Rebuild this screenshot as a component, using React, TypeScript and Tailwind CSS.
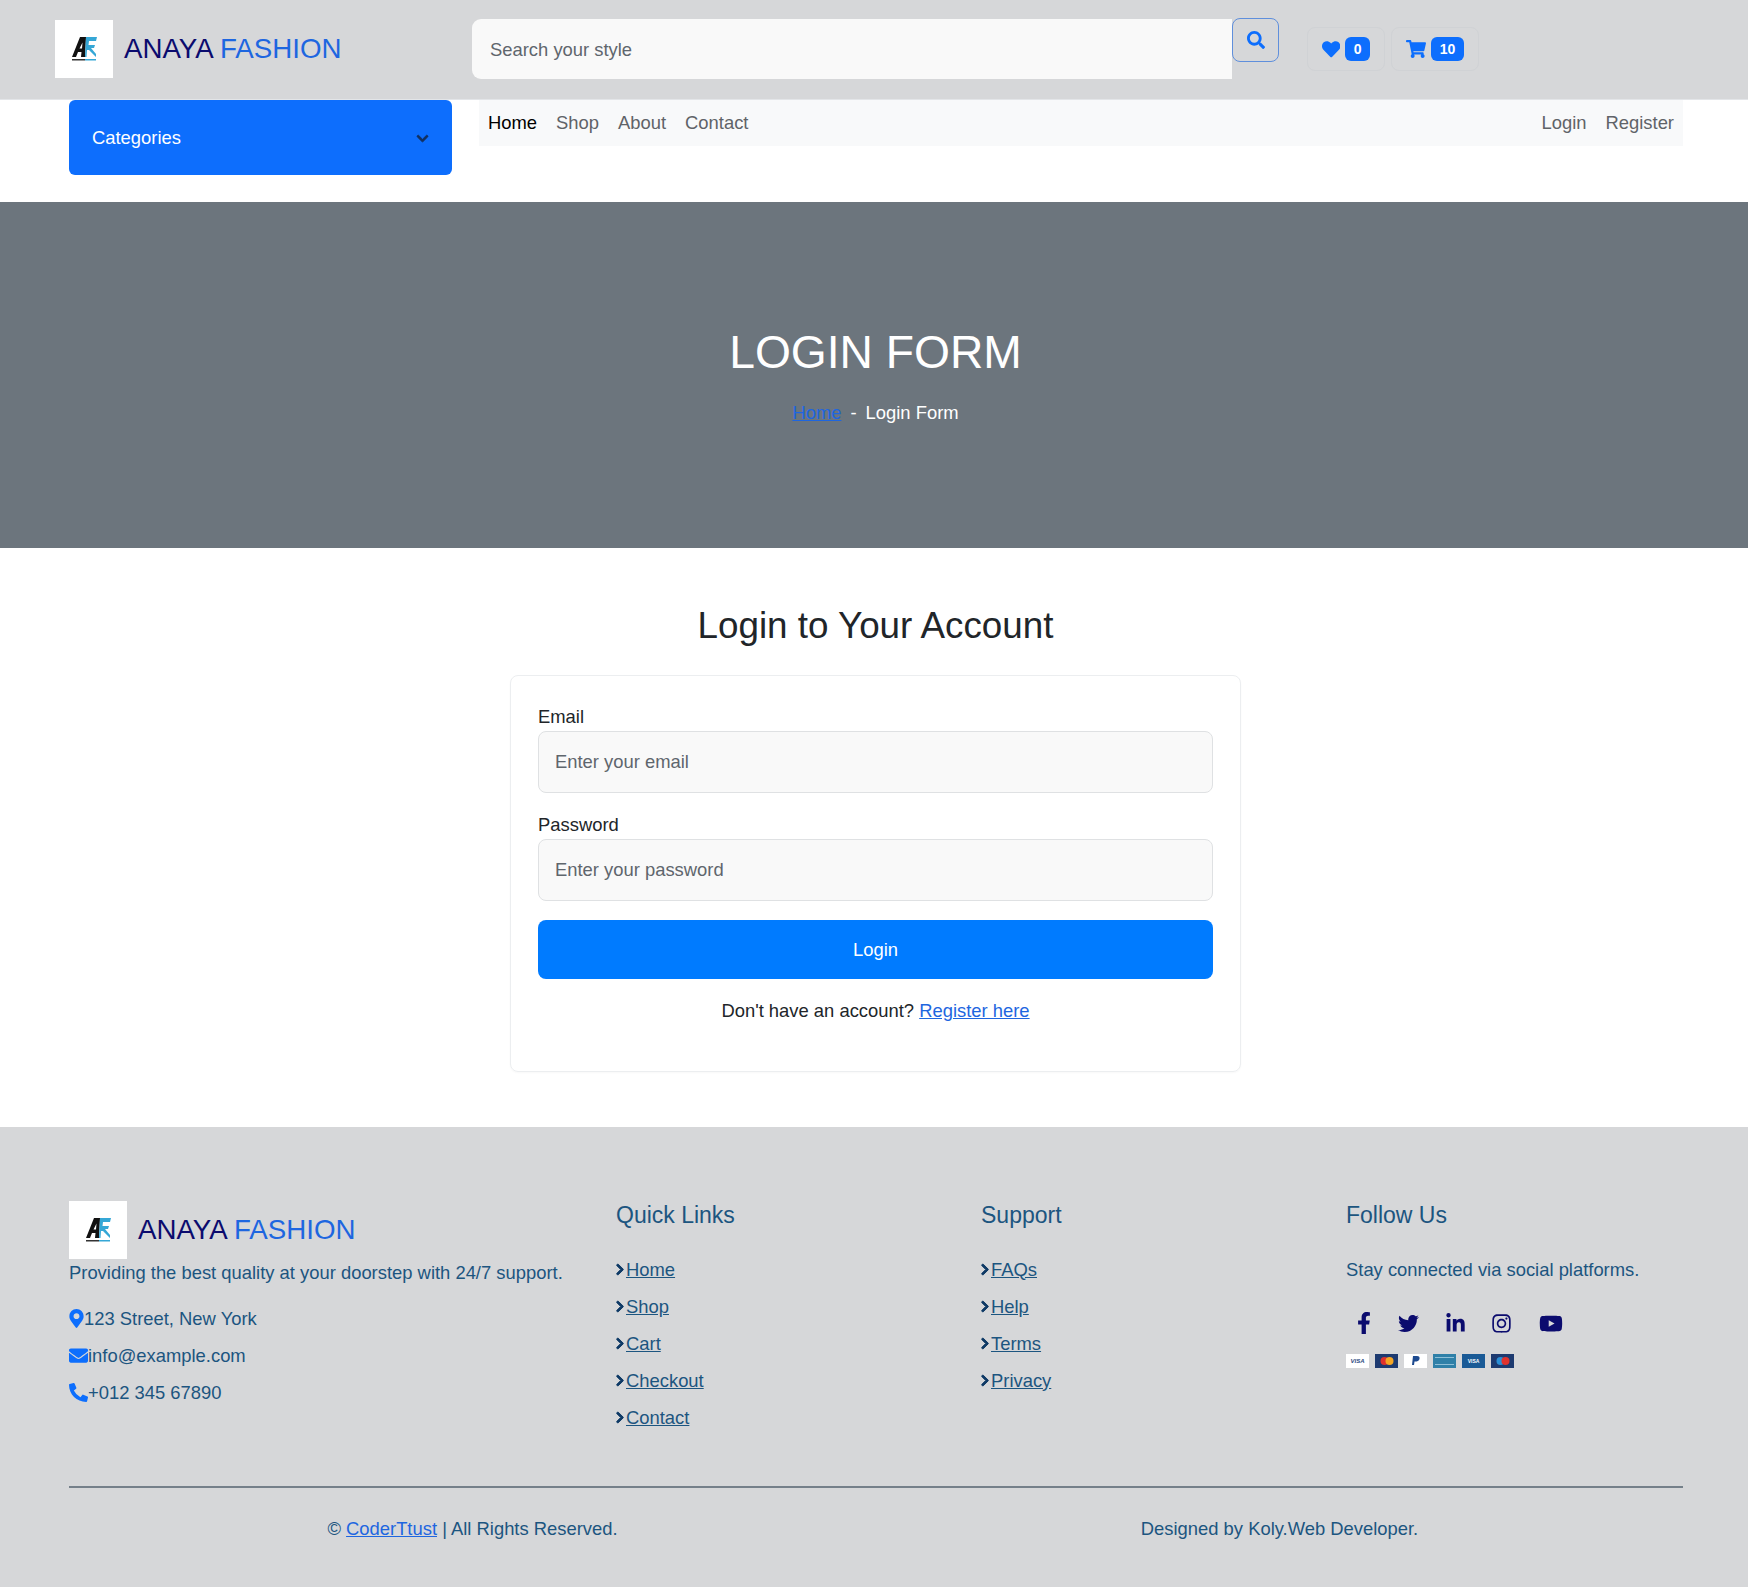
import { FaChevronDown, FaChevronRight, FaEnvelope, FaFacebookF, FaHeart, FaInstagram, FaLinkedinIn, FaMapMarkerAlt, FaPhoneAlt, FaSearch, FaShoppingCart, FaTwitter, FaYoutube } from "react-icons/fa"

const quickLinks = ["Home", "Shop", "Cart", "Checkout", "Contact"]
const supportLinks = ["FAQs", "Help", "Terms", "Privacy"]

const Logo = () => (
  <div className="flex h-[58px] w-[58px] shrink-0 items-center justify-center bg-white">
    <svg width="26" height="26" viewBox="0 0 26 26">
      <path d="M1 21 9 1h6l-1 20h-4l.5-5H7l-2 5zM8.500 12.500h2.500l.5-6z" fill="#111" fillRule="evenodd" />
      <polygon points="15,1 26,1 25,5 18,5 17.500,9 24,9 23,12 20,12 25,18 25,21 18,14 16,14 15.500,21 14,21" fill="#35a7d6" />
      <rect x="1" y="23" width="13" height="1.500" fill="#333" />
      <rect x="14" y="23" width="11" height="1.500" fill="#35a7d6" />
    </svg>
  </div>
)

const Brand = () => (
  <div className="flex items-center gap-[11px]">
    <Logo />
    <span className="text-[27.7px] leading-none">
      <span className="text-[#0b0b6e]">ANAYA</span> <span className="text-[#1e66e0]">FASHION</span>
    </span>
  </div>
)

const FooterLink = ({ name }: { name: string }) => (
  <li className="flex h-[37px] items-center">
    <FaChevronRight strokeWidth={40} className="mr-[2px] h-[13px] w-[8px] text-[#0f3a66]" />
    <a href="#" className="underline">{name}</a>
  </li>
)

const PayCard = ({ bg, children }: { bg: string; children: React.ReactNode }) => (
  <div className={`flex h-[14px] w-[23px] items-center justify-center ${bg}`}>{children}</div>
)

export default function App() {
  return (
    <div className="min-h-[1587px] bg-white font-['Liberation_Sans',Arial,sans-serif] text-[18.4px] text-[#212529]">
      {/* top bar */}
      <header className="flex h-[100px] items-center border-b border-[#e3e5e8] bg-[#d6d7d9] pb-[1px] pl-[55px]">
        <div className="w-[417px]">
          <Brand />
        </div>
        <div className="flex h-[60px] w-[760px] items-center rounded-l-[9px] bg-[#f9f9f9] px-[18px] pt-[2px] text-[#5f666d]">Search your style</div>
        <button className="mb-[19px] flex h-[44px] w-[47px] items-center justify-center rounded-[8px] border border-[#5f8fdc] text-[18px] text-[#0d6efd]">
          <FaSearch />
        </button>
        <div className="ml-[28px] flex h-[44px] w-[78px] items-center justify-center gap-[5px] rounded-[8px] border border-[#d0d2d5] text-[#0d6efd]">
          <FaHeart />
          <span className="flex h-[24px] w-[25px] items-center justify-center rounded-[6px] bg-[#0d6efd] text-[14px] font-bold text-white">0</span>
        </div>
        <div className="ml-[6px] flex h-[44px] w-[88px] items-center justify-center gap-[5px] rounded-[8px] border border-[#d0d2d5] text-[20px] text-[#0d6efd]">
          <FaShoppingCart />
          <span className="flex h-[24px] w-[33px] items-center justify-center rounded-[6px] bg-[#0d6efd] text-[14px] font-bold text-white">10</span>
        </div>
      </header>

      {/* nav */}
      <div className="flex h-[102px] items-start pl-[69px] pr-[65px]">
        <div className="flex h-[75px] w-[383px] items-center justify-between rounded-[6px] bg-[#0d6efd] px-[23px] pt-[1px] text-white">
          Categories
          <FaChevronDown strokeWidth={30} className="text-[13px] text-[#12305f]" />
        </div>
        <nav className="ml-[27px] flex h-[46px] flex-1 items-center justify-between bg-[#f8f9fa] px-[9px] text-[#5f6368]">
          <div className="flex gap-[19px]">
            <a href="#" className="text-black">Home</a>
            <a href="#">Shop</a>
            <a href="#">About</a>
            <a href="#">Contact</a>
          </div>
          <div className="flex gap-[19px]">
            <a href="#">Login</a>
            <a href="#">Register</a>
          </div>
        </nav>
      </div>

      {/* hero */}
      <section className="flex h-[346px] flex-col items-center bg-[#6c757d] pl-[3px] pt-[123px] text-white">
        <h1 className="text-[46.2px] leading-[54px]">LOGIN FORM</h1>
        <div className="mt-[20px] flex gap-[9px]">
          <a href="#" className="text-[#1e66e0] underline">Home</a>
          <span>-</span>
          <span>Login Form</span>
        </div>
      </section>

      {/* login */}
      <main className="flex flex-col items-center pl-[3px] pt-[56px]">
        <h2 className="text-[36.8px] leading-[44px]">Login to Your Account</h2>
        <div className="mt-[27px] h-[397px] w-[731px] rounded-[8px] border border-[#eceef0] px-[27px] pt-[28px] shadow-[0_1px_2px_rgba(0,0,0,0.03)]">
          <label className="block leading-[26px]">Email</label>
          <input placeholder="Enter your email" className="mt-[1px] h-[62px] w-full rounded-[8px] border border-[#dfe1e3] bg-[#f9f9f9] px-[16px] outline-none placeholder:text-[#5f666d]" />
          <label className="mt-[19px] block leading-[26px]">Password</label>
          <input placeholder="Enter your password" className="mt-[1px] h-[62px] w-full rounded-[8px] border border-[#dfe1e3] bg-[#f9f9f9] px-[16px] outline-none placeholder:text-[#5f666d]" />
          <button className="mt-[19px] h-[59px] w-full rounded-[8px] bg-[#007bff] text-white">Login</button>
          <p className="mt-[19px] text-center leading-[26px]">
            Don't have an account? <a href="#" className="text-[#1e66e0] underline">Register here</a>
          </p>
        </div>
      </main>

      {/* footer */}
      <footer className="mt-[55px] h-[460px] bg-[#d6d7d9] px-[65px] pt-[74px] text-[#1c5580]">
        <div className="grid h-[285px] grid-cols-[547px_365px_365px_1fr] pl-[4px]">
          <div>
            <Brand />
            <p className="mt-[1px] leading-[26px]">Providing the best quality at your doorstep with 24/7 support.</p>
            <p className="mt-[14px] flex h-[37px] items-center"><FaMapMarkerAlt className="h-[19px] w-[15px] text-[#0d6efd]" />123 Street, New York</p>
            <p className="flex h-[37px] items-center"><FaEnvelope className="text-[19px] text-[#0d6efd]" />info@example.com</p>
            <p className="flex h-[37px] items-center"><FaPhoneAlt className="text-[19px] text-[#0d6efd]" />+012 345 67890</p>
          </div>
          <div>
            <h5 className="text-[23px] leading-[28px]">Quick Links</h5>
            <ul className="mt-[22px]">
              {quickLinks.map(l => <FooterLink key={l} name={l} />)}
            </ul>
          </div>
          <div>
            <h5 className="text-[23px] leading-[28px]">Support</h5>
            <ul className="mt-[22px]">
              {supportLinks.map(l => <FooterLink key={l} name={l} />)}
            </ul>
          </div>
          <div>
            <h5 className="text-[23px] leading-[28px]">Follow Us</h5>
            <p className="mt-[22px] flex h-[37px] items-center">Stay connected via social platforms.</p>
            <div className="mt-[24px] flex items-center gap-[27px] pl-[11px] text-[#0b0b6e]">
              <FaFacebookF className="h-[22px] w-[14px]" />
              <FaTwitter className="h-[21px] w-[21px]" />
              <FaLinkedinIn className="h-[21px] w-[19px]" />
              <FaInstagram className="h-[21px] w-[19px]" />
              <FaYoutube className="ml-[1px] h-[21px] w-[24px]" />
            </div>
            <div className="mt-[20px] flex gap-[6px]">
              <PayCard bg="bg-white"><span className="text-[6px] font-bold italic text-[#2b4a7f]">VISA</span></PayCard>
              <PayCard bg="bg-[#1d3a70]">
                <svg width="16" height="10" viewBox="0 0 16 10"><circle cx="5.500" cy="5" r="4" fill="#e0322d" /><circle cx="10.500" cy="5" r="4" fill="#f5a623" /></svg>
              </PayCard>
              <PayCard bg="bg-white">
                <svg width="10" height="12" viewBox="0 0 10 12"><path d="M2 1h4c2 0 3 1 2.500 3S6 6.500 4.500 6.500H3.500L3 10H1z" fill="#1d4a8f" /></svg>
              </PayCard>
              <PayCard bg="bg-[#2f80a8]">
                <div className="h-[8px] w-[19px] border-y border-[#8fc0d8]" />
              </PayCard>
              <PayCard bg="bg-[#1a5a96]"><span className="text-[5px] font-bold leading-[6px] text-white">VISA</span></PayCard>
              <PayCard bg="bg-[#1d3a70]">
                <svg width="16" height="10" viewBox="0 0 16 10"><circle cx="5.500" cy="5" r="4" fill="#2a8fd6" /><circle cx="10.500" cy="5" r="4" fill="#e0322d" /></svg>
              </PayCard>
            </div>
          </div>
        </div>
        <div className="ml-[4px] border-t-2 border-[#75808a]" />
        <div className="ml-[4px] mt-[28px] grid grid-cols-2 text-center leading-[26px]">
          <p>© <a href="#" className="text-[#1e66e0] underline">CoderTtust</a> | All Rights Reserved.</p>
          <p>Designed by Koly.Web Developer.</p>
        </div>
      </footer>
    </div>
  )
}
